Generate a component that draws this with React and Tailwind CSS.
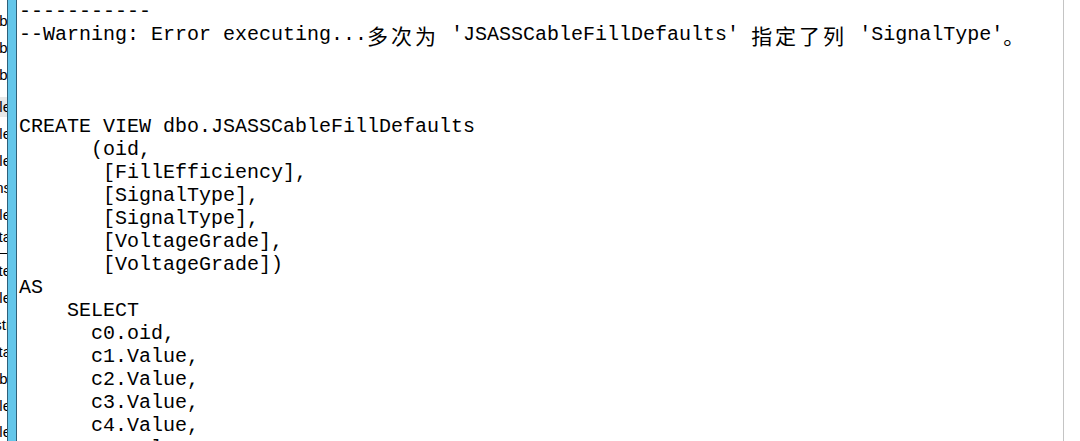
import React from "react";

const sideRows = [
  { t: "obj", top: 11 },
  { t: "obj", top: 38 },
  { t: "obj", top: 65 },
  { t: "ble", top: 97, sel: true },
  { t: "ble", top: 124 },
  { t: "ble", top: 151 },
  { t: "ons", top: 178 },
  { t: "ble", top: 205 },
  { t: "ata", top: 227 },
  { t: "ate", top: 261 },
  { t: "ble", top: 288 },
  { t: "str", top: 315 },
  { t: "ata", top: 342 },
  { t: "obj", top: 369 },
  { t: "ble", top: 396 },
  { t: "ble", top: 422 },
];

const lines = [
  "-----------",
  [
    "--Warning: Error executing...",
    { cjk: "多次为" },
    " 'JSASSCableFillDefaults' ",
    { cjk: "指定了列" },
    " 'SignalType'",
    { cjk: "。" },
  ],
  "",
  "",
  "",
  "CREATE VIEW dbo.JSASSCableFillDefaults",
  "      (oid,",
  "       [FillEfficiency],",
  "       [SignalType],",
  "       [SignalType],",
  "       [VoltageGrade],",
  "       [VoltageGrade])",
  "AS",
  "    SELECT",
  "      c0.oid,",
  "      c1.Value,",
  "      c2.Value,",
  "      c3.Value,",
  "      c4.Value,",
  "      c5.Value,",
];

const Line = ({ line }) => {
  if (typeof line === "string") {
    return <div className="h-[23px] whitespace-pre">{line || " "}</div>;
  }
  return (
    <div className="flex h-[23px] items-start whitespace-pre">
      {line.map((part, i) =>
        typeof part === "string" ? (
          <span key={i}>{part}</span>
        ) : (
          <span
            key={i}
            className="inline-block h-[23px] pt-[1px] text-[21px] leading-[23px] tracking-[3px]"
            style={{ fontFamily: '"Noto Sans CJK SC", sans-serif' }}
          >
            {part.cjk}
          </span>
        )
      )}
    </div>
  );
};

export default function App() {
  return (
    <div className="flex h-[441px] w-[1080px] overflow-hidden bg-white">
      {/* clipped object tree on the far left */}
      <div className="relative w-[7px] shrink-0 overflow-hidden bg-white">
        {sideRows.map((r, i) => (
          <div
            key={i}
            className={`absolute right-0 flex h-[20px] w-[60px] items-center justify-end text-[15px] text-black ${r.sel ? "bg-[#e8e8e8]" : ""}`}
            style={{ top: r.top, fontFamily: '"Liberation Sans", sans-serif' }}
          >
            <span className="-mr-[4px]">{r.t}</span>
          </div>
        ))}
        <div className="absolute left-0 top-[253px] h-px w-full bg-black" />
      </div>

      {/* splitter */}
      <div className="w-[10px] shrink-0 border-x border-[#2f5f78] bg-[#63c6ea]" />

      {/* editor */}
      <div
        className="flex-1 overflow-hidden pl-[2px] text-[20px] leading-[23px] text-black"
        style={{ fontFamily: '"Liberation Mono", "Noto Sans CJK SC", monospace' }}
      >
        {lines.map((l, i) => (
          <Line key={i} line={l} />
        ))}
      </div>

      {/* right margin */}
      <div className="w-[17px] shrink-0 border-l border-[#c4c4c4] bg-white" />
    </div>
  );
}
